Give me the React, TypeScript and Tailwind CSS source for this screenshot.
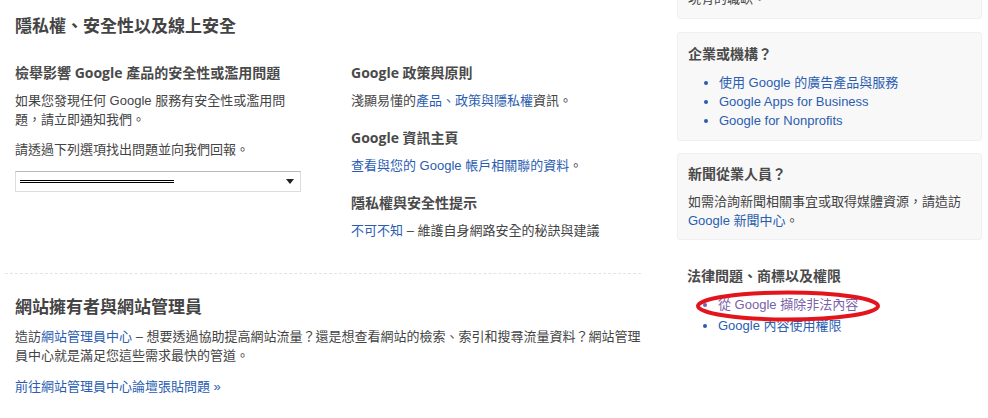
import React from "react";

const body = "font-['Liberation_Sans','Noto_Sans_CJK_TC',sans-serif] text-[13px] leading-[19px] text-[#444]";
const sub = "font-['Open_Sans','Noto_Sans_CJK_TC',sans-serif] text-[14px] leading-[20px] font-bold text-[#4a4a4a]";
const big = "font-['Liberation_Serif','Noto_Sans_CJK_TC',serif] text-[17px] leading-[24px] font-bold text-[#444]";
const link = "text-[#2a5db0]";

function Card({ children, className }: { children: React.ReactNode; className?: string }) {
  return (
    <div className={`rounded-[3px] bg-[#f8f8f8] border border-[#f0f0f0] px-[10px] ${className ?? ""}`}>
      {children}
    </div>
  );
}

export default function App() {
  return (
    <div className="w-[988px] h-[418px] overflow-hidden bg-white flex">
      {/* main column */}
      <div className="w-[650px] pt-[15px]">
        <h2 className={`${big} pl-[15px]`}>隱私權、安全性以及線上安全</h2>

        <div className="flex mt-[24px] pl-[15px]">
          <div className="w-[286px]">
            <h3 className={sub}>檢舉影響 Google 產品的安全性或濫用問題</h3>
            <p className={`${body} mt-[8px]`}>如果您發現任何 Google 服務有安全性或濫用問題，請立即通知我們。</p>
            <p className={`${body} mt-[11px]`}>請透過下列選項找出問題並向我們回報。</p>
            <div className="mt-[12px] h-[21px] border border-[#dcdcdc] border-t-[#b9b9b9] rounded-[1px] flex items-center justify-between pl-[4px] pr-[6px]">
              <div className="w-[154px] flex flex-col gap-[1px]">
                <div className="h-px bg-black" />
                <div className="h-px bg-black" />
              </div>
              <svg width="8" height="5" viewBox="0 0 8 5">
                <path d="M0 0h8L4 5z" fill="#222" />
              </svg>
            </div>
          </div>

          <div className="ml-[50px] w-[290px]">
            <h3 className={sub}>Google 政策與原則</h3>
            <p className={`${body} mt-[8px]`}>
              淺顯易懂的<span className={link}>產品、政策與隱私權</span>資訊。
            </p>
            <h3 className={`${sub} mt-[18px]`}>Google 資訊主頁</h3>
            <p className={`${body} mt-[8px]`}>
              <span className={link}>查看與您的 Google 帳戶相關聯的資料</span>。
            </p>
            <h3 className={`${sub} mt-[18px]`}>隱私權與安全性提示</h3>
            <p className={`${body} mt-[8px]`}>
              <span className={link}>不可不知</span> – 維護自身網路安全的秘訣與建議
            </p>
          </div>
        </div>

        <div className="mt-[33px] ml-[5px] w-[636px] border-t border-dashed border-[#e3e3e3]" />

        <div className="pl-[15px]">
          <h2 className={`${big} mt-[22px]`}>網站擁有者與網站管理員</h2>
          <p className={`${body} mt-[7px] w-[630px]`}>
            造訪<span className={link}>網站管理員中心</span> – 想要透過協助提高網站流量？還是想查看網站的檢索、索引和搜尋流量資料？網站管理員中心就是滿足您這些需求最快的管道。
          </p>
          <p className={`${body} mt-[12px]`}>
            <span className={link}>前往網站管理員中心論壇張貼問題 »</span>
          </p>
        </div>
      </div>

      {/* sidebar */}
      <div className="ml-[27px] w-[305px]">
        <Card className="-mt-[12px] pb-[10px]">
          <p className={body}>現有的職缺。</p>
        </Card>

        <Card className="mt-[13px] pt-[11px] pb-[10px]">
          <h3 className={sub}>企業或機構？</h3>
          <ul className={`${body} mt-[9px] list-disc pl-[31px] leading-[19.5px]`}>
            <li className={link}>使用 Google 的廣告產品與服務</li>
            <li className={link}>Google Apps for Business</li>
            <li className={link}>Google for Nonprofits</li>
          </ul>
        </Card>

        <Card className="mt-[12px] pt-[10px] pb-[9px]">
          <h3 className={sub}>新聞從業人員？</h3>
          <p className={`${body} mt-[8px]`}>
            如需洽詢新聞相關事宜或取得媒體資源，請造訪<br />
            <span className={link}>Google 新聞中心</span>。
          </p>
        </Card>

        <div className="mt-[26px] px-[10px]">
          <h3 className={sub}>法律問題、商標以及權限</h3>
          <div className="relative">
            <ul className={`${body} mt-[8px] list-disc pl-[31px] leading-[21px]`}>
              <li className="text-[#7a5fa9]">從 Google 擷除非法內容</li>
              <li className={link}>Google 內容使用權限</li>
            </ul>
            <svg className="absolute left-[8px] top-[-4px] pointer-events-none" width="186" height="34" viewBox="0 0 186 34">
              <ellipse cx="93" cy="16" rx="90" ry="13.5" fill="none" stroke="#e3141c" strokeWidth="4" />
            </svg>
          </div>
        </div>
      </div>
    </div>
  );
}
